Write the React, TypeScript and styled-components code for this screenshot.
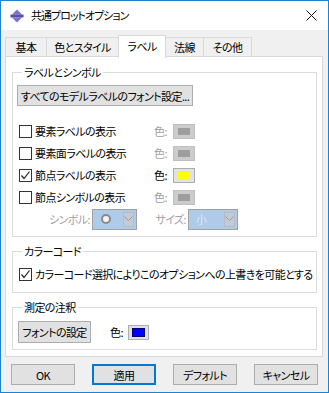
import { FunctionComponent, ReactNode } from "react";
import styled, { createGlobalStyle } from "styled-components";

const GlobalStyle = createGlobalStyle`
  html, body {
    margin: 0;
    padding: 0;
    background: #ffffff;
  }
  body {
    font-family: "Noto Sans CJK JP", "Noto Sans", sans-serif;
    font-size: 11px;
    letter-spacing: -0.6px;
    font-feature-settings: "palt";
  }
  * {
    box-sizing: border-box;
  }
`;

const CheckBox: FunctionComponent<{ checked?: boolean; children: ReactNode }> = ({
  checked,
  children,
}) => (
  <CheckLabel>
    <Box>
      {checked && (
        <svg width="11" height="11" viewBox="0 0 11 11">
          <polyline points="1.5,5.5 4,8.5 9.5,1.5" fill="none" stroke="#222" strokeWidth="1.2" />
        </svg>
      )}
    </Box>
    <span>{children}</span>
  </CheckLabel>
);

const ColorRow: FunctionComponent<{
  label: string;
  checked?: boolean;
  enabled?: boolean;
  color?: string;
}> = ({ label, checked, enabled, color }) => (
  <LabelRow>
    <CheckBox checked={checked}>{label}</CheckBox>
    <ColorCaption $disabled={!enabled}>色:</ColorCaption>
    <Swatch $disabled={!enabled}>
      <SwatchFill $color={enabled ? color || "#999" : "#9e9e9e"} />
    </Swatch>
  </LabelRow>
);

const Chevron = () => (
  <svg width="9" height="6" viewBox="0 0 9 6">
    <polyline points="0.5,0.5 4.5,4.5 8.5,0.5" fill="none" stroke="#9a9a9a" strokeWidth="1" />
  </svg>
);

const App: FunctionComponent = () => {
  return (
    <>
      <GlobalStyle />
      <Window>
        <TitleBar>
          <svg width="14" height="14" viewBox="0 0 14 14">
            <polygon points="7,0.5 12,5.5 2,5.5" fill="#7b73c4" />
            <rect x="0.5" y="5.5" width="13" height="3" fill="#5450a6" />
            <polygon points="2,8.5 12,8.5 7,13.5" fill="#7b73c4" />
          </svg>
          <Title>共通プロットオプション</Title>
          <Close>
            <svg width="11" height="11" viewBox="0 0 11 11">
              <line x1="0.5" y1="0.5" x2="10.5" y2="10.5" stroke="#111" strokeWidth="1" />
              <line x1="10.5" y1="0.5" x2="0.5" y2="10.5" stroke="#111" strokeWidth="1" />
            </svg>
          </Close>
        </TitleBar>

        <Body>
          <TabStrip>
            <Tab $w={41}>基本</Tab>
            <Tab $w={72}>色とスタイル</Tab>
            <Tab $w={47} $active>
              ラベル
            </Tab>
            <Tab $w={38}>法線</Tab>
            <Tab $w={48}>その他</Tab>
          </TabStrip>

          <Panel>
            <Group $top={5}>
              <Legend>ラベルとシンボル</Legend>
              <FontButton>すべてのモデルラベルのフォント設定...</FontButton>
              <Rows>
                <ColorRow label="要素ラベルの表示" />
                <ColorRow label="要素面ラベルの表示" />
                <ColorRow label="節点ラベルの表示" checked enabled color="#ffff00" />
                <ColorRow label="節点シンボルの表示" />
                <SymbolRow>
                  <ComboCaption $w={73}>シンボル:</ComboCaption>
                  <Combo $w={45}>
                    <ComboValue>
                      <svg width="12" height="12" viewBox="0 0 12 12">
                        <circle cx="6" cy="6" r="4" fill="#f4f4f4" stroke="#8a8a8a" strokeWidth="2" />
                      </svg>
                    </ComboValue>
                    <ComboArrow>
                      <Chevron />
                    </ComboArrow>
                  </Combo>
                  <ComboCaption $w={51}>サイズ:</ComboCaption>
                  <Combo $w={50}>
                    <ComboValue>小</ComboValue>
                    <ComboArrow>
                      <Chevron />
                    </ComboArrow>
                  </Combo>
                </SymbolRow>
              </Rows>
            </Group>

            <Group $top={4} $bottom={7}>
              <Legend>カラーコード</Legend>
              <SingleRow>
                <CheckBox checked>カラーコード選択によりこのオプションへの上書きを可能とする</CheckBox>
              </SingleRow>
            </Group>

            <Group $top={6}>
              <Legend>測定の注釈</Legend>
              <AnnotRow>
                <SmallButton>フォントの設定</SmallButton>
                <ColorCaption>色:</ColorCaption>
                <BlueSwatch>
                  <BlueFill />
                </BlueSwatch>
              </AnnotRow>
            </Group>
          </Panel>

          <ButtonBar>
            <DialogButton>OK</DialogButton>
            <DialogButton $default>適用</DialogButton>
            <DialogButton>デフォルト</DialogButton>
            <DialogButton>キャンセル</DialogButton>
          </ButtonBar>
        </Body>
      </Window>
    </>
  );
};

export default App;

const Window = styled.div`
  width: 329px;
  height: 393px;
  border: 1px solid #1883d7;
  background: #f0f0f0;
  display: flex;
  flex-direction: column;
`;

const TitleBar = styled.div`
  height: 29px;
  background: #ffffff;
  display: flex;
  align-items: center;
  padding-left: 9px;
  padding-right: 10px;
  flex-shrink: 0;
`;

const Title = styled.div`
  margin-left: 7px;
  color: #000;
  font-size: 11px;
  letter-spacing: -1px;
  line-height: 16px;
  margin-top: -1px;
`;

const Close = styled.div`
  margin-left: auto;
  display: flex;
  align-items: center;
  padding-right: 1px;
`;

const Body = styled.div`
  padding: 5px 5px 0 4px;
  display: flex;
  flex-direction: column;
`;

const TabStrip = styled.div`
  display: flex;
  align-items: flex-end;
  height: 22px;
  position: relative;
  z-index: 1;
`;

const Tab = styled.div<{ $w: number; $active?: boolean }>`
  width: ${(p) => p.$w + 1}px;
  height: ${(p) => (p.$active ? 23 : 20)}px;
  margin-right: -1px;
  margin-bottom: ${(p) => (p.$active ? -1 : 0)}px;
  border: 1px solid #d9d9d9;
  border-bottom: ${(p) => (p.$active ? "none" : "1px solid #d9d9d9")};
  background: ${(p) => (p.$active ? "#ffffff" : "#f0f0f0")};
  position: relative;
  z-index: ${(p) => (p.$active ? 2 : 1)};
  display: flex;
  align-items: center;
  justify-content: center;
  padding-bottom: ${(p) => (p.$active ? 2 : 0)}px;
  color: #000;
  line-height: 16px;
`;

const Panel = styled.div`
  width: 318px;
  height: 301px;
  margin-top: -1px;
  border: 1px solid #d9d9d9;
  background: #ffffff;
  padding: 7px 5px 0 6px;
  display: flex;
  flex-direction: column;
  gap: 6px;
`;

const Group = styled.fieldset<{ $top?: number; $bottom?: number }>`
  margin: 0;
  border: 1px solid #dcdcdc;
  padding: ${(p) => p.$top ?? 7}px 6px ${(p) => p.$bottom ?? 6}px 6px;
  min-width: 0;
`;

const Legend = styled.legend`
  margin-left: 3px;
  padding: 0 2px;
  line-height: 16px;
  color: #000;
`;

const FontButton = styled.div`
  width: 176px;
  height: 21px;
  margin-left: -2px;
  border: 1px solid #adadad;
  background: #e1e1e1;
  display: flex;
  align-items: center;
  justify-content: center;
  white-space: nowrap;
  color: #000;
`;

const Rows = styled.div`
  margin-top: 14px;
  display: flex;
  flex-direction: column;
`;

const LabelRow = styled.div`
  height: 22px;
  display: grid;
  grid-template-columns: 135px 19px 22px;
  align-items: center;
`;

const CheckLabel = styled.label`
  display: flex;
  align-items: center;
  gap: 3px;
  white-space: nowrap;
  color: #000;
  line-height: 16px;
`;

const Box = styled.span`
  width: 13px;
  height: 13px;
  border: 1px solid #333333;
  background: #ffffff;
  display: flex;
  align-items: center;
  justify-content: center;
  flex-shrink: 0;
`;

const ColorCaption = styled.span<{ $disabled?: boolean }>`
  color: ${(p) => (p.$disabled ? "#a0a0a0" : "#000")};
  white-space: nowrap;
`;

const Swatch = styled.div<{ $disabled?: boolean }>`
  width: 22px;
  height: 15px;
  border: 1px solid ${(p) => (p.$disabled ? "#bfbfbf" : "#adadad")};
  background: ${(p) => (p.$disabled ? "#cccccc" : "#e1e1e1")};
  padding: 3px 4px;
  display: flex;
`;

const SwatchFill = styled.div<{ $color: string }>`
  flex: 1;
  background: ${(p) => p.$color};
`;

const SymbolRow = styled.div`
  height: 22px;
  display: flex;
  align-items: center;
`;

const ComboCaption = styled.span<{ $w: number }>`
  width: ${(p) => p.$w}px;
  padding-right: 2px;
  text-align: right;
  color: #a0a0a0;
  white-space: nowrap;
`;

const Combo = styled.div<{ $w: number }>`
  width: ${(p) => p.$w}px;
  height: 21px;
  border: 1px solid #a0a0a0;
  background: #aecbea;
  display: flex;
  align-items: stretch;
  padding: 2px;
`;

const ComboValue = styled.div`
  flex: 1;
  display: flex;
  align-items: center;
  padding-left: 5px;
  color: #e2e8f0;
`;

const ComboArrow = styled.div`
  width: 11px;
  background: #c3ccd6;
  border: 1px solid #b5bcc5;
  display: flex;
  align-items: center;
  justify-content: center;
`;

const SingleRow = styled.div`
  height: 22px;
  display: flex;
  align-items: center;
`;

const AnnotRow = styled.div`
  display: flex;
  align-items: center;
`;

const SmallButton = styled.div`
  width: 73px;
  height: 22px;
  margin-left: -1px;
  border: 1px solid #adadad;
  background: #e1e1e1;
  display: flex;
  align-items: center;
  justify-content: center;
  white-space: nowrap;
  color: #000;
  margin-right: 19px;
`;

const BlueSwatch = styled.div`
  width: 21px;
  height: 15px;
  margin-left: 5px;
  border: 1px solid #adadad;
  background: #e1e1e1;
  padding: 2px 3px;
  display: flex;
`;

const BlueFill = styled.div`
  flex: 1;
  background: #0000ff;
  border: 1px solid #00007a;
`;

const ButtonBar = styled.div`
  margin-top: 7px;
  padding-left: 6px;
  display: flex;
  gap: 17px;
`;

const DialogButton = styled.div<{ $default?: boolean }>`
  width: 64px;
  height: 21px;
  border: ${(p) => (p.$default ? "2px solid #0078d7" : "1px solid #adadad")};
  background: #e1e1e1;
  display: flex;
  align-items: center;
  justify-content: center;
  color: #000;
  white-space: nowrap;
`;
